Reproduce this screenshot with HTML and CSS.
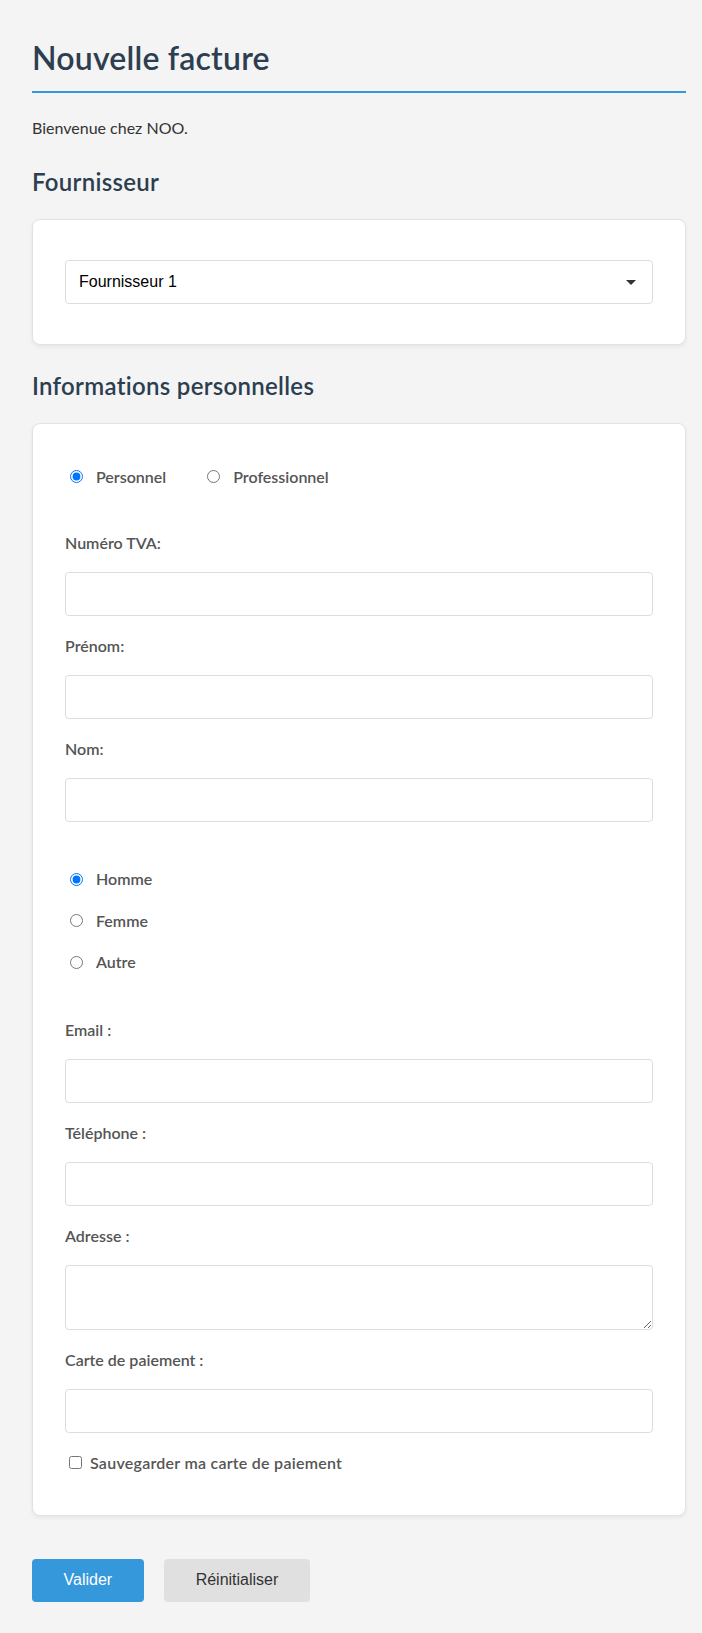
FILE: index.html
```html
<!DOCTYPE html>
<html lang="fr">
<head>
<meta charset="utf-8">
<title>Nouvelle facture</title>
<link rel="stylesheet" href="styles.css">
</head>
<body>
<div class="page">
  <h1 class="title">Nouvelle facture</h1>
  <p class="intro">Bienvenue chez NOO.</p>

  <h2 class="section-title">Fournisseur</h2>
  <div class="card">
    <div class="select-wrap">
      <select class="select">
        <option>Fournisseur 1</option>
        <option>Fournisseur 2</option>
      </select>
    </div>
  </div>

  <h2 class="section-title">Informations personnelles</h2>
  <div class="card">
    <div class="radio-line radio-line-top">
      <label class="choice"><input type="radio" name="type" checked><span>Personnel</span></label>
      <label class="choice"><input type="radio" name="type"><span>Professionnel</span></label>
    </div>

    <label class="field-label">Numéro TVA:</label>
    <input class="field" type="text">

    <label class="field-label">Prénom:</label>
    <input class="field" type="text">

    <label class="field-label">Nom:</label>
    <input class="field" type="text">

    <div class="radio-stack">
      <label class="choice"><input type="radio" name="genre" checked><span>Homme</span></label>
      <label class="choice"><input type="radio" name="genre"><span>Femme</span></label>
      <label class="choice"><input type="radio" name="genre"><span>Autre</span></label>
    </div>

    <label class="field-label">Email :</label>
    <input class="field" type="email">

    <label class="field-label">Téléphone :</label>
    <input class="field" type="tel">

    <label class="field-label">Adresse :</label>
    <textarea class="field field-area"></textarea>

    <label class="field-label">Carte de paiement :</label>
    <input class="field" type="text">

    <label class="check-line"><input type="checkbox"><span>Sauvegarder ma carte de paiement</span></label>
  </div>

  <div class="actions">
    <button class="btn btn-primary" type="button">Valider</button>
    <button class="btn btn-secondary" type="button">Réinitialiser</button>
  </div>
</div>
</body>
</html>
```

FILE: styles.css
```css
html, body {
  margin: 0;
  padding: 0;
  background: #f4f4f4;
}

.page {
  padding: 38px 16px 32px 32px;
  font-family: "Lato", "Noto Sans", sans-serif;
  color: #333;
}

.title {
  margin: 0;
  font-size: 32px;
  line-height: 40px;
  font-weight: 600;
  letter-spacing: 0.2px;
  color: #2c3e50;
  padding-bottom: 13px;
  border-bottom: 2px solid #3498db;
}

.intro {
  margin: 23px 0 0;
  font-size: 16px;
  line-height: 24px;
  color: #333;
}

.section-title {
  margin: 25.5px 0 21px;
  font-size: 24px;
  line-height: 32px;
  font-weight: 600;
  letter-spacing: 0.3px;
  color: #2c3e50;
}

.card {
  background: #fff;
  border: 1px solid #e2e2e2;
  border-radius: 8px;
  box-shadow: 0 2px 4px rgba(0, 0, 0, 0.06);
  padding: 32px;
}

.select-wrap {
  position: relative;
  margin: 8px 0;
}

.select-wrap::after {
  content: "";
  position: absolute;
  right: 17px;
  top: 20px;
  border-left: 5px solid transparent;
  border-right: 5px solid transparent;
  border-top: 5px solid #333;
  pointer-events: none;
}

.select {
  display: block;
  width: 100%;
  height: 44px;
  box-sizing: border-box;
  -webkit-appearance: none;
  appearance: none;
  background: #fff;
  border: 1px solid #ddd;
  border-radius: 4px;
  padding: 0 13px;
  font-family: "Liberation Sans", Arial, sans-serif;
  font-size: 16px;
  color: #000;
}

.radio-line {
  display: flex;
  gap: 36px;
}

.radio-line-top {
  margin: 8px 0 43px;
}

.radio-stack {
  display: flex;
  flex-direction: column;
  gap: 17.5px;
  margin: 44.5px 0 44px;
}

.choice {
  display: flex;
  align-items: center;
  height: 24px;
  font-size: 16px;
  font-weight: 600;
  color: #555;
}

.choice input {
  width: 13px;
  height: 13px;
  margin: 1px 13px 0 5px;
}

.field-label {
  display: block;
  font-size: 16px;
  line-height: 24px;
  font-weight: 600;
  color: #555;
  margin-bottom: 17px;
}

.field {
  display: block;
  width: 100%;
  height: 44px;
  box-sizing: border-box;
  border: 1px solid #ddd;
  border-radius: 4px;
  background: #fff;
  padding: 10px;
  margin: 0 0 18px;
  font-family: "Liberation Sans", Arial, sans-serif;
  font-size: 16px;
}

.field-area {
  height: 65px;
  resize: vertical;
}

.check-line {
  display: flex;
  align-items: center;
  height: 24px;
  margin-top: 1px;
  margin-bottom: 8px;
  font-size: 16px;
  font-weight: 600;
  letter-spacing: 0.25px;
  color: #555;
}

.check-line input {
  width: 13px;
  height: 13px;
  margin: 0 8px 0 4px;
}

.actions {
  display: flex;
  gap: 20px;
  margin-top: 43px;
}

.btn {
  height: 43px;
  padding: 0 32px;
  border: none;
  border-radius: 4px;
  font-family: "Liberation Sans", Arial, sans-serif;
  font-size: 16px;
  cursor: pointer;
}

.btn-primary {
  background: #3498db;
  color: #fff;
  padding: 0 31.5px;
}

.btn-secondary {
  background: #e0e0e0;
  color: #333;
}
```
